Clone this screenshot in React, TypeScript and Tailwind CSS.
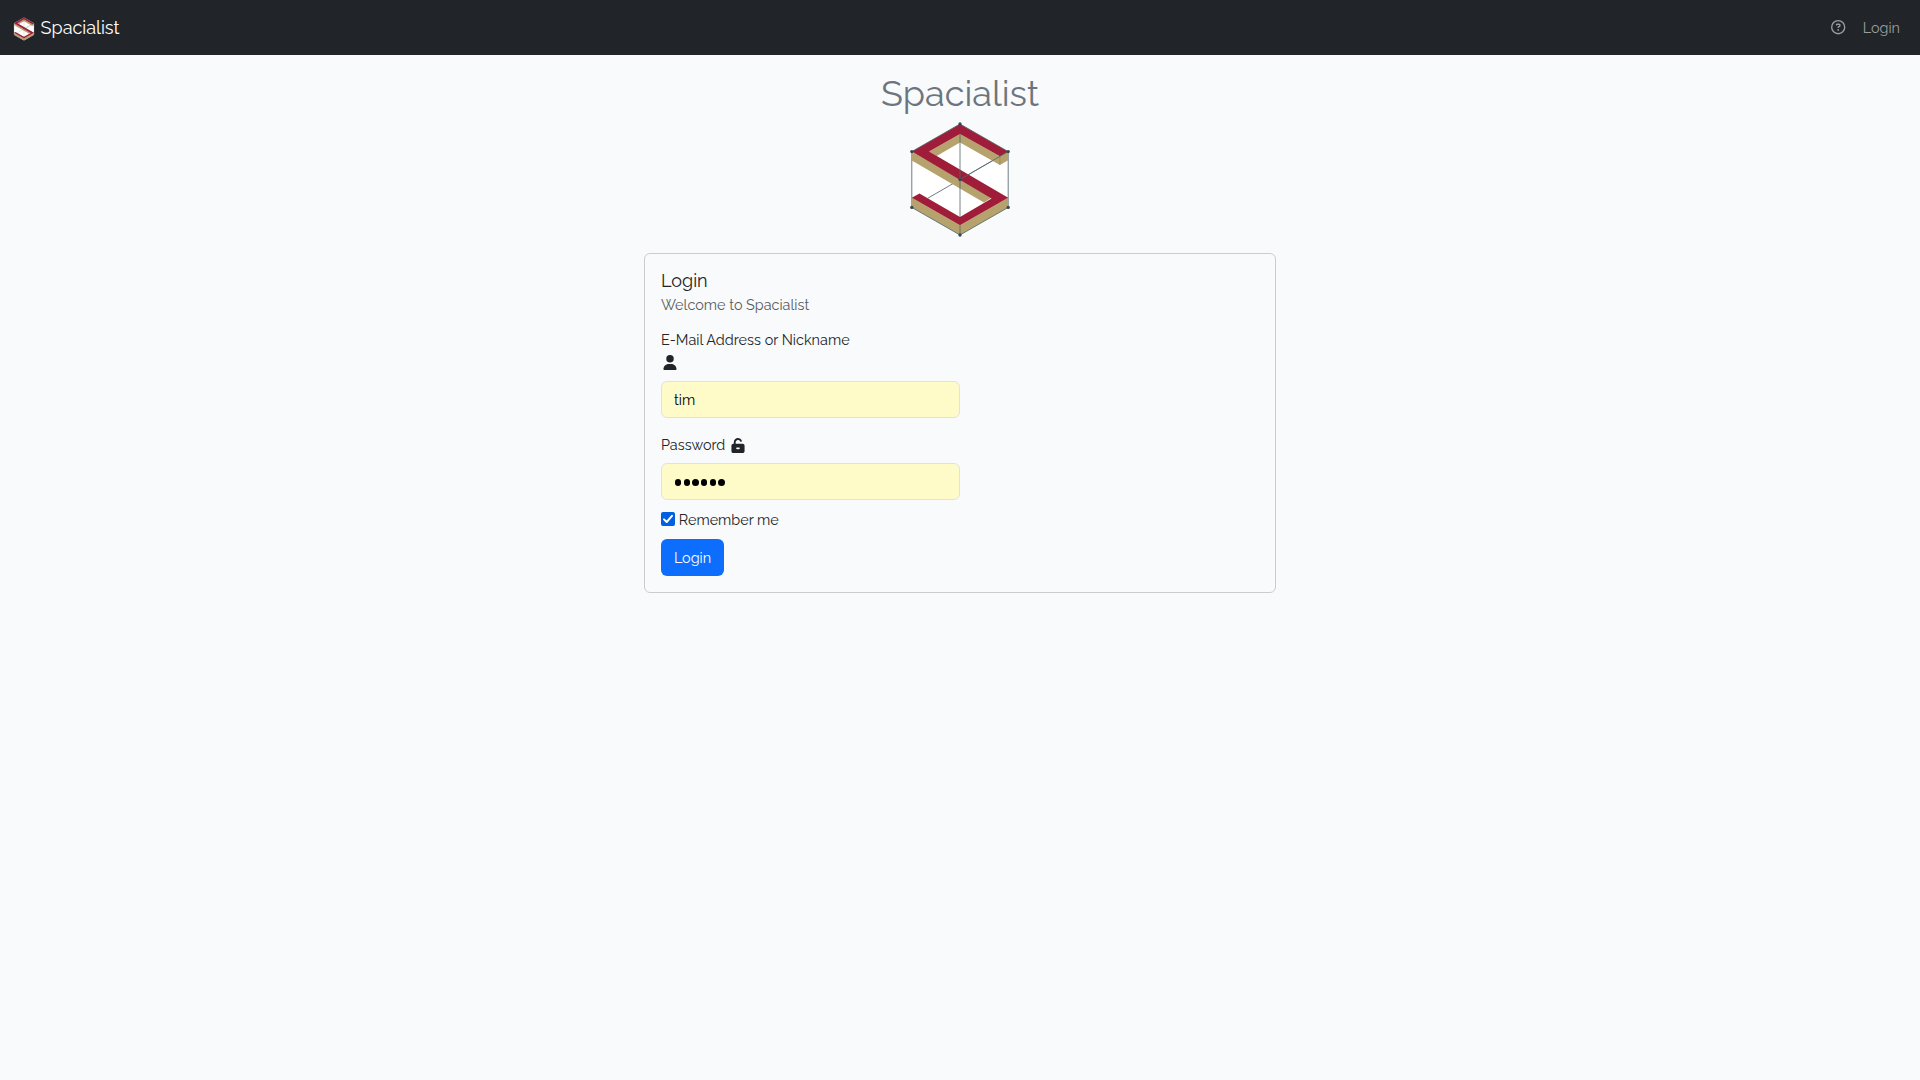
import React from "react";
import { FaRegCircleQuestion, FaUnlockKeyhole, FaUser } from "react-icons/fa6";

function Logo({ className }: { className: string }) {
  return (
    <svg viewBox="28 20 304 346" className={className}>
      <polygon points="180,26 325,109 325,277 180,360 35,277 35,109" fill="#fff" />
      <path d="M35 109V277M325 109V277M325 109L82 250" fill="none" stroke="#52646b" strokeWidth="2.5" />
      <g fill="#b5a26d">
        <polygon points="87,109 180,56 300,123 325,109 325,135 300,149 180,82 110,122" />
        <polygon points="35,109 275,248 252,262 35,136" />
        <polygon points="35,248 180,331 325,248 325,277 180,360 35,277" />
      </g>
      <path
        d="M180 26L325 109L300 123L180 56L87 109L325 248L180 331L35 248L58 235L180 306L275 250L35 109Z"
        fill="#a01d3a"
      />
      <g stroke="#52646b" strokeWidth="2.4" fill="none">
        <path d="M35 109L180 26L325 109M35 277L180 360L325 277M180 56V306M180 331V360M180 193L325 109" />
        <path d="M300 123V149" strokeWidth="1" />
      </g>
      <g fill="#374850">
        <circle cx="180" cy="26" r="5" />
        <circle cx="35" cy="109" r="5" />
        <circle cx="325" cy="109" r="5" />
        <circle cx="180" cy="193" r="5" />
        <circle cx="35" cy="277" r="5" />
        <circle cx="325" cy="277" r="5" />
        <circle cx="180" cy="360" r="5" />
      </g>
    </svg>
  );
}

export default function App() {
  return (
    <div className="min-h-screen bg-[#f8fafc] font-['Raleway','Lato',sans-serif] text-[14.4px] leading-[22px] text-[#212529]">
      <nav className="flex h-[55px] items-center justify-between bg-[#212529] pr-5 pl-[13px]">
        <a className="flex items-center text-white">
          <Logo className="mt-[2px] h-6 w-[22px]" />
          <span className="ml-[5.6px] text-[18px] leading-[27px] whitespace-nowrap">Spacialist</span>
        </a>
        <div className="flex items-center text-[#9b9d9e]">
          <FaRegCircleQuestion className="mr-[17.2px] size-[14.4px]" />
          <span>Login</span>
        </div>
      </nav>
      <main className="flex flex-col items-center">
        <h1 className="mt-[17px] h-[43px] text-[36px] leading-[43px] font-normal text-[#6c757d]">Spacialist</h1>
        <Logo className="mt-[7px] h-[115px] w-[102px]" />
        <section className="mt-4 h-[340px] w-[632px] rounded-md border border-[#cacccf] p-4">
          <h2 className="h-[22px] text-[18px] leading-[22px] font-normal">Login</h2>
          <p className="mt-[2px] text-[#595c5f]">Welcome to Spacialist</p>
          <div className="mt-[13px] w-[299px]">
            <label className="block tracking-[0.03px] whitespace-nowrap">E-Mail Address or Nickname</label>
            <FaUser className="mt-[4px] ml-[2px] h-[15px] w-[14px]" />
            <input
              className="mt-[11px] block h-[37px] w-full rounded-md border border-[#dee2e6] bg-[#fffbc8] px-3 text-black outline-none"
              defaultValue="tim"
            />
          </div>
          <div className="mt-[16px] w-[299px]">
            <label className="flex h-[22px] items-center">
              <span>Password</span>
              <FaUnlockKeyhole className="ml-[6px] h-[15px] w-[14px]" />
            </label>
            <div className="mt-[7px] flex h-[37px] items-center gap-[2.4px] rounded-md border border-[#dee2e6] bg-[#fffbc8] pt-[2px] pl-[13px]">
              {[0, 1, 2, 3, 4, 5].map((dot) => (
                <span key={dot} className="size-[6.3px] rounded-full bg-black" />
              ))}
            </div>
          </div>
          <label className="mt-2 flex h-[22px] items-center">
            <span className="flex size-[14px] items-center justify-center rounded-[2px] bg-[#0060df]">
              <svg viewBox="0 0 14 14" className="size-[14px]" fill="none" stroke="#fff" strokeWidth="2">
                <path d="M3 7.4L5.7 10L11 3.8" strokeLinecap="round" strokeLinejoin="round" />
              </svg>
            </span>
            <span className="ml-[3.8px] pt-[2px]">Remember me</span>
          </label>
          <button className="mt-[9px] block h-[37px] w-[63px] rounded-md bg-[#0d6efd] text-center text-white">
            Login
          </button>
        </section>
      </main>
    </div>
  );
}
